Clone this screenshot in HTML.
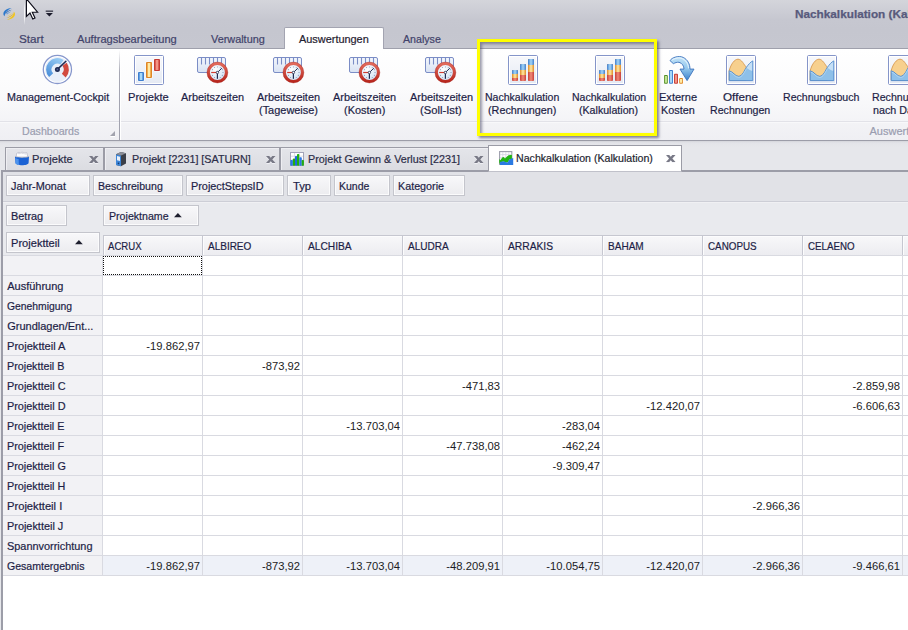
<!DOCTYPE html>
<html><head><meta charset="utf-8"><title>Nachkalkulation (Kalkulation)</title>
<style>
html,body{margin:0;padding:0;}
body{width:908px;height:630px;overflow:hidden;position:relative;background:#fff;font-family:"Liberation Sans",sans-serif;font-size:11px;color:#1d1e46;}
.a{position:absolute;white-space:nowrap;}
.t{line-height:13px;height:13px;transform-origin:0 0;-webkit-text-stroke:.2px;}
.v{line-height:13px;height:13px;text-align:right;width:96px;color:#1c1c24;transform:scaleX(1.02);transform-origin:100% 0;}
#title{left:0;top:0;width:908px;height:48px;background:linear-gradient(#d4d5db 0,#c6c7d0 20px,#c5c6cf 30px,#c6c7d0 48px);}
#seltab{left:284px;top:27px;width:100px;height:22px;box-sizing:border-box;background:#fff;border:1px solid #a3a4b1;border-bottom:none;border-radius:2px 2px 0 0;}
#rib{left:0;top:48px;width:908px;height:93px;background:linear-gradient(#ffffff 0,#fbfbfc 40px,#f4f4f7 72px);border-top:1px solid #9fa0ac;border-bottom:1px solid #9c9da8;box-sizing:border-box;}
#cap{left:0;top:121px;width:908px;height:19px;background:linear-gradient(#f3f3f6,#efeff3);border-top:1px solid #e2e2e8;box-shadow:inset 0 1px 0 #f8f8fa;box-sizing:border-box;}
#gap{left:0;top:141px;width:908px;height:489px;background:linear-gradient(#d4d5da 0,#e3e4e9 2px,#e6e7eb 6px,#e6e7eb 100%);}
.dt{top:147px;height:24px;box-sizing:border-box;border:1px solid #9b9ca6;border-bottom:none;background:linear-gradient(#e4e5ea,#dbdce1);box-shadow:inset 1px 1px 0 #eeeef2;}
#adt{left:488px;top:145px;width:194px;height:27px;box-sizing:border-box;border:1px solid #9b9ca6;border-bottom:1px solid #c0c1ca;background:#fff;}
#cont{left:1px;top:170px;width:920px;height:470px;box-sizing:border-box;border:2px solid #9c9da8;background:#fff;}
#farea{left:3px;top:172px;width:905px;height:29px;background:#e1e2e7;border-bottom:1px solid #cdced6;}
#darea{left:3px;top:202px;width:905px;height:53px;background:#e9eaee;border-top:1px solid #f0f0f3;box-sizing:border-box;}
.fb{height:21px;box-sizing:border-box;border:1px solid #c4c5cc;background:linear-gradient(#f8f8fa,#ececef);box-shadow:inset 0 0 0 1px #fbfbfc;}
.ch{top:235px;height:20px;width:100px;box-sizing:border-box;border-right:1px solid #c6c7d0;border-top:1px solid #c6c7d0;background:linear-gradient(#f8f8fa,#ececf0);box-shadow:inset 1px 1px 0 #fcfcfd;}
.rh{left:3px;width:99px;height:19px;background:#f2f2f5;}
.hl{left:3px;width:905px;height:1px;background:#d9dae1;}
.vl{top:255px;width:1px;height:321px;background:#d9dae1;}
.x{width:9px;height:7px;}
</style></head><body>
<div class="a" id="title"></div>
<div class="a" id="rib"></div>
<div class="a" id="seltab"></div>
<div class="a" id="cap"></div>
<div class="a" style="left:119px;top:50px;width:1px;height:90px;background:linear-gradient(rgba(160,161,175,0),#a6a7b3 25%,#a0a1ae)"></div><div class="a" style="left:120px;top:50px;width:1px;height:90px;background:linear-gradient(rgba(255,255,255,0),#fff 25%,#fff)"></div>
<div class="a" id="gap"></div>
<svg width="0" height="0" style="position:absolute"><defs>
<linearGradient id="gbx" x1="0" y1="0" x2="0" y2="1"><stop offset="0" stop-color="#f7f8fb"/><stop offset="1" stop-color="#e4e9f3"/></linearGradient>
<linearGradient id="gbl" x1="0" y1="0" x2="1" y2="0"><stop offset="0" stop-color="#3f7fcf"/><stop offset=".5" stop-color="#a6d6f6"/><stop offset="1" stop-color="#3f7fcf"/></linearGradient>
<linearGradient id="gor" x1="0" y1="0" x2="1" y2="0"><stop offset="0" stop-color="#e08a26"/><stop offset=".5" stop-color="#ffeaa4"/><stop offset="1" stop-color="#e08a26"/></linearGradient>
<linearGradient id="grd" x1="0" y1="0" x2="1" y2="0"><stop offset="0" stop-color="#c8403a"/><stop offset=".5" stop-color="#f08a78"/><stop offset="1" stop-color="#c8403a"/></linearGradient>
<linearGradient id="ggn" x1="0" y1="0" x2="1" y2="0"><stop offset="0" stop-color="#5a9a2c"/><stop offset=".5" stop-color="#b8e08a"/><stop offset="1" stop-color="#5a9a2c"/></linearGradient>
<linearGradient id="grul" x1="0" y1="0" x2="0" y2="1"><stop offset="0" stop-color="#f4f7fc"/><stop offset="1" stop-color="#d8e2f3"/></linearGradient>
<radialGradient id="gface" cx=".4" cy=".35" r=".7"><stop offset="0" stop-color="#ffffff"/><stop offset="1" stop-color="#c9dcf2"/></radialGradient>
<linearGradient id="gring" x1="0" y1="0" x2="0" y2="1"><stop offset="0" stop-color="#e26a5c"/><stop offset="1" stop-color="#b8281f"/></linearGradient>
<linearGradient id="garr" x1="0" y1="0" x2="0" y2="1"><stop offset="0" stop-color="#c4e4f8"/><stop offset=".5" stop-color="#93c6ec"/><stop offset="1" stop-color="#3a80cc"/></linearGradient>
<linearGradient id="gbarc" x1="0" y1="0" x2="0" y2="1"><stop offset="0" stop-color="#67a9e6"/><stop offset="1" stop-color="#3274c4"/></linearGradient>
<linearGradient id="ggb" x1="0" y1="1" x2=".6" y2="0"><stop offset="0" stop-color="#4288d6"/><stop offset="1" stop-color="#93c8f2"/></linearGradient>
<linearGradient id="gtabx" x1="0" y1="0" x2="0" y2="1"><stop offset="0" stop-color="#8ec0ee"/><stop offset="1" stop-color="#1f62c0"/></linearGradient>
</defs></svg>
<svg class="a" style="left:0;top:0" width="20" height="24" viewBox="0 0 20 24">
<path d="M11.6 8 C7.5 8.2 3.6 10.4 3.4 13.6 C3.3 15 4 15.8 4.6 16.2 C4.6 13.2 7 10.2 11.6 8Z" fill="#2a78cc"/>
<path d="M12 9.8 C8.6 10.2 5.8 12 5.4 14.6 C6.6 12.6 9 11 12 9.8Z" fill="#1f63b8"/>
<path d="M11.2 11.6 C9 12.2 7.2 13.2 6.6 14.8 C8 13.6 9.4 12.6 11.2 11.6Z" fill="#3a8ad8"/>
<path d="M6.8 19.9 C10.9 19.7 14.8 17.5 15 14.3 C15.1 12.9 14.4 12.1 13.8 11.7 C13.8 14.7 11.4 17.7 6.8 19.9Z" fill="#f2c41c"/>
<path d="M6.4 18.1 C9.8 17.7 12.6 15.9 13 13.3 C11.8 15.3 9.4 16.9 6.4 18.1Z" fill="#e8b010"/>
<path d="M7.2 16.3 C9.4 15.7 11.2 14.7 11.8 13.1 C10.4 14.3 9 15.3 7.2 16.3Z" fill="#f6d23c"/>
</svg>
<div class="a" style="left:24px;top:2px;width:1px;height:23px;background:linear-gradient(rgba(255,255,255,0),rgba(255,255,255,.8) 30%,rgba(255,255,255,.8) 70%,rgba(255,255,255,0));"></div>
<svg class="a" style="left:20px;top:0" width="22" height="22" viewBox="20 0 22 22"><path d="M26.4 -1.2 L26.4 16.4 L30 13 L32.8 19 L35 18 L32.3 12.2 L37.6 12.2 Z" fill="#fff" stroke="#0c0c18" stroke-width="1.15" stroke-linejoin="miter"/></svg>
<svg class="a" style="left:45px;top:10px" width="9" height="8" viewBox="0 0 9 8"><rect x="0.7" y="0.6" width="7.4" height="1.1" fill="#1c1c2c"/><path d="M0.9 2.9 L7.9 2.9 L4.4 6.6Z" fill="#1c1c2c"/></svg>
<svg class="a" style="left:42px;top:54px" width="31" height="31" viewBox="0 0 31 31">
<circle cx="15.4" cy="15.4" r="14.1" fill="#fff" stroke="#8797cc" stroke-width="1.3"/>
<circle cx="15.4" cy="15.4" r="12.4" fill="#e9eff9"/>
<path d="M7.14 23.11 A11.3 11.3 0 0 1 21.55 5.92 L18.56 10.54 A5.8 5.8 0 0 0 11.16 19.36Z" fill="url(#ggb)"/>
<path d="M24.70 8.64 A11.5 11.5 0 0 1 23.67 23.39 L19.86 19.71 A6.2 6.2 0 0 0 20.42 11.76Z" fill="#d24a3e"/>
<line x1="15.4" y1="15.4" x2="23.9" y2="7.3" stroke="#1e2a52" stroke-width="1.5" stroke-linecap="round"/>
<circle cx="15.4" cy="15.4" r="2.5" fill="#1e2a52"/><circle cx="15.4" cy="15.4" r="0.9" fill="#56649a"/>
</svg>
<svg class="a" style="left:0;top:0" width="908" height="140" viewBox="0 0 908 140">
<rect x="134.5" y="55.5" width="29" height="29" rx="1.2" fill="url(#gbx)" stroke="#8595c9"/><rect x="135.5" y="56.5" width="27" height="27" fill="none" stroke="#fff"/>
<rect x="137.4" y="71.4" width="7.2" height="10.2" rx="1.4" fill="#fff" opacity=".75"/><rect x="138" y="72" width="6" height="9" rx="0.9" fill="#3f7fcf"/><rect x="139" y="73" width="4" height="7" fill="#5d9be0"/><rect x="139.9" y="73" width="2.2" height="7" fill="#a8d8f7"/><rect x="145.4" y="61.4" width="7.2" height="17.2" rx="1.4" fill="#fff" opacity=".75"/><rect x="146" y="62" width="6" height="16" rx="0.9" fill="#de8626"/><rect x="147" y="63" width="4" height="14" fill="#f0a848"/><rect x="147.9" y="63" width="2.2" height="14" fill="#ffeaa6"/><rect x="153.4" y="58.4" width="7.2" height="13.2" rx="1.4" fill="#fff" opacity=".75"/><rect x="154" y="59" width="6" height="12" rx="0.9" fill="#c43c36"/><rect x="155" y="60" width="4" height="10" fill="#dc5a4e"/><rect x="155.9" y="60" width="2.2" height="10" fill="#f29484"/>
</svg>
<svg class="a" style="left:0;top:0" width="908" height="140" viewBox="0 0 908 140"><g transform="translate(0,0)"><rect x="197.5" y="57.5" width="28" height="15" rx="1.5" fill="url(#grul)" stroke="#7b8dc6"/><line x1="201.5" y1="58" x2="201.5" y2="64.5" stroke="#7b8dc6" stroke-width="1.1"/><line x1="205.5" y1="58" x2="205.5" y2="64.5" stroke="#7b8dc6" stroke-width="1.1"/><line x1="209.5" y1="58" x2="209.5" y2="64.5" stroke="#7b8dc6" stroke-width="1.1"/><line x1="213.5" y1="58" x2="213.5" y2="64.5" stroke="#7b8dc6" stroke-width="1.1"/><line x1="217.5" y1="58" x2="217.5" y2="64.5" stroke="#7b8dc6" stroke-width="1.1"/><line x1="221.5" y1="58" x2="221.5" y2="64.5" stroke="#7b8dc6" stroke-width="1.1"/><circle cx="217.4" cy="72.5" r="9" fill="url(#gface)" stroke="url(#gring)" stroke-width="3"/><circle cx="217.4" cy="72.5" r="10.4" fill="none" stroke="#a8241c" stroke-width=".6" opacity=".7"/><circle cx="217.40" cy="66.90" r=".45" fill="#3c4a78"/><circle cx="220.20" cy="67.65" r=".45" fill="#3c4a78"/><circle cx="222.25" cy="69.70" r=".45" fill="#3c4a78"/><circle cx="223.00" cy="72.50" r=".45" fill="#3c4a78"/><circle cx="222.25" cy="75.30" r=".45" fill="#3c4a78"/><circle cx="220.20" cy="77.35" r=".45" fill="#3c4a78"/><circle cx="217.40" cy="78.10" r=".45" fill="#3c4a78"/><circle cx="214.60" cy="77.35" r=".45" fill="#3c4a78"/><circle cx="212.55" cy="75.30" r=".45" fill="#3c4a78"/><circle cx="211.80" cy="72.50" r=".45" fill="#3c4a78"/><circle cx="212.55" cy="69.70" r=".45" fill="#3c4a78"/><circle cx="214.60" cy="67.65" r=".45" fill="#3c4a78"/><line x1="217.4" y1="72.5" x2="211.3" y2="72.5" stroke="#d23c30" stroke-width="1.2"/><line x1="217.4" y1="72.5" x2="217.4" y2="78.8" stroke="#1e2a52" stroke-width="1.2"/><line x1="217.4" y1="72.5" x2="221.8" y2="68.2" stroke="#1e2a52" stroke-width="1"/><circle cx="217.4" cy="72.5" r="1.2" fill="#fff" stroke="#1e2a52" stroke-width=".8"/></g><g transform="translate(76,0)"><rect x="197.5" y="57.5" width="28" height="15" rx="1.5" fill="url(#grul)" stroke="#7b8dc6"/><line x1="201.5" y1="58" x2="201.5" y2="64.5" stroke="#7b8dc6" stroke-width="1.1"/><line x1="205.5" y1="58" x2="205.5" y2="64.5" stroke="#7b8dc6" stroke-width="1.1"/><line x1="209.5" y1="58" x2="209.5" y2="64.5" stroke="#7b8dc6" stroke-width="1.1"/><line x1="213.5" y1="58" x2="213.5" y2="64.5" stroke="#7b8dc6" stroke-width="1.1"/><line x1="217.5" y1="58" x2="217.5" y2="64.5" stroke="#7b8dc6" stroke-width="1.1"/><line x1="221.5" y1="58" x2="221.5" y2="64.5" stroke="#7b8dc6" stroke-width="1.1"/><circle cx="217.4" cy="72.5" r="9" fill="url(#gface)" stroke="url(#gring)" stroke-width="3"/><circle cx="217.4" cy="72.5" r="10.4" fill="none" stroke="#a8241c" stroke-width=".6" opacity=".7"/><circle cx="217.40" cy="66.90" r=".45" fill="#3c4a78"/><circle cx="220.20" cy="67.65" r=".45" fill="#3c4a78"/><circle cx="222.25" cy="69.70" r=".45" fill="#3c4a78"/><circle cx="223.00" cy="72.50" r=".45" fill="#3c4a78"/><circle cx="222.25" cy="75.30" r=".45" fill="#3c4a78"/><circle cx="220.20" cy="77.35" r=".45" fill="#3c4a78"/><circle cx="217.40" cy="78.10" r=".45" fill="#3c4a78"/><circle cx="214.60" cy="77.35" r=".45" fill="#3c4a78"/><circle cx="212.55" cy="75.30" r=".45" fill="#3c4a78"/><circle cx="211.80" cy="72.50" r=".45" fill="#3c4a78"/><circle cx="212.55" cy="69.70" r=".45" fill="#3c4a78"/><circle cx="214.60" cy="67.65" r=".45" fill="#3c4a78"/><line x1="217.4" y1="72.5" x2="211.3" y2="72.5" stroke="#d23c30" stroke-width="1.2"/><line x1="217.4" y1="72.5" x2="217.4" y2="78.8" stroke="#1e2a52" stroke-width="1.2"/><line x1="217.4" y1="72.5" x2="221.8" y2="68.2" stroke="#1e2a52" stroke-width="1"/><circle cx="217.4" cy="72.5" r="1.2" fill="#fff" stroke="#1e2a52" stroke-width=".8"/></g><g transform="translate(152,0)"><rect x="197.5" y="57.5" width="28" height="15" rx="1.5" fill="url(#grul)" stroke="#7b8dc6"/><line x1="201.5" y1="58" x2="201.5" y2="64.5" stroke="#7b8dc6" stroke-width="1.1"/><line x1="205.5" y1="58" x2="205.5" y2="64.5" stroke="#7b8dc6" stroke-width="1.1"/><line x1="209.5" y1="58" x2="209.5" y2="64.5" stroke="#7b8dc6" stroke-width="1.1"/><line x1="213.5" y1="58" x2="213.5" y2="64.5" stroke="#7b8dc6" stroke-width="1.1"/><line x1="217.5" y1="58" x2="217.5" y2="64.5" stroke="#7b8dc6" stroke-width="1.1"/><line x1="221.5" y1="58" x2="221.5" y2="64.5" stroke="#7b8dc6" stroke-width="1.1"/><circle cx="217.4" cy="72.5" r="9" fill="url(#gface)" stroke="url(#gring)" stroke-width="3"/><circle cx="217.4" cy="72.5" r="10.4" fill="none" stroke="#a8241c" stroke-width=".6" opacity=".7"/><circle cx="217.40" cy="66.90" r=".45" fill="#3c4a78"/><circle cx="220.20" cy="67.65" r=".45" fill="#3c4a78"/><circle cx="222.25" cy="69.70" r=".45" fill="#3c4a78"/><circle cx="223.00" cy="72.50" r=".45" fill="#3c4a78"/><circle cx="222.25" cy="75.30" r=".45" fill="#3c4a78"/><circle cx="220.20" cy="77.35" r=".45" fill="#3c4a78"/><circle cx="217.40" cy="78.10" r=".45" fill="#3c4a78"/><circle cx="214.60" cy="77.35" r=".45" fill="#3c4a78"/><circle cx="212.55" cy="75.30" r=".45" fill="#3c4a78"/><circle cx="211.80" cy="72.50" r=".45" fill="#3c4a78"/><circle cx="212.55" cy="69.70" r=".45" fill="#3c4a78"/><circle cx="214.60" cy="67.65" r=".45" fill="#3c4a78"/><line x1="217.4" y1="72.5" x2="211.3" y2="72.5" stroke="#d23c30" stroke-width="1.2"/><line x1="217.4" y1="72.5" x2="217.4" y2="78.8" stroke="#1e2a52" stroke-width="1.2"/><line x1="217.4" y1="72.5" x2="221.8" y2="68.2" stroke="#1e2a52" stroke-width="1"/><circle cx="217.4" cy="72.5" r="1.2" fill="#fff" stroke="#1e2a52" stroke-width=".8"/></g><g transform="translate(228,0)"><rect x="197.5" y="57.5" width="28" height="15" rx="1.5" fill="url(#grul)" stroke="#7b8dc6"/><line x1="201.5" y1="58" x2="201.5" y2="64.5" stroke="#7b8dc6" stroke-width="1.1"/><line x1="205.5" y1="58" x2="205.5" y2="64.5" stroke="#7b8dc6" stroke-width="1.1"/><line x1="209.5" y1="58" x2="209.5" y2="64.5" stroke="#7b8dc6" stroke-width="1.1"/><line x1="213.5" y1="58" x2="213.5" y2="64.5" stroke="#7b8dc6" stroke-width="1.1"/><line x1="217.5" y1="58" x2="217.5" y2="64.5" stroke="#7b8dc6" stroke-width="1.1"/><line x1="221.5" y1="58" x2="221.5" y2="64.5" stroke="#7b8dc6" stroke-width="1.1"/><circle cx="217.4" cy="72.5" r="9" fill="url(#gface)" stroke="url(#gring)" stroke-width="3"/><circle cx="217.4" cy="72.5" r="10.4" fill="none" stroke="#a8241c" stroke-width=".6" opacity=".7"/><circle cx="217.40" cy="66.90" r=".45" fill="#3c4a78"/><circle cx="220.20" cy="67.65" r=".45" fill="#3c4a78"/><circle cx="222.25" cy="69.70" r=".45" fill="#3c4a78"/><circle cx="223.00" cy="72.50" r=".45" fill="#3c4a78"/><circle cx="222.25" cy="75.30" r=".45" fill="#3c4a78"/><circle cx="220.20" cy="77.35" r=".45" fill="#3c4a78"/><circle cx="217.40" cy="78.10" r=".45" fill="#3c4a78"/><circle cx="214.60" cy="77.35" r=".45" fill="#3c4a78"/><circle cx="212.55" cy="75.30" r=".45" fill="#3c4a78"/><circle cx="211.80" cy="72.50" r=".45" fill="#3c4a78"/><circle cx="212.55" cy="69.70" r=".45" fill="#3c4a78"/><circle cx="214.60" cy="67.65" r=".45" fill="#3c4a78"/><line x1="217.4" y1="72.5" x2="211.3" y2="72.5" stroke="#d23c30" stroke-width="1.2"/><line x1="217.4" y1="72.5" x2="217.4" y2="78.8" stroke="#1e2a52" stroke-width="1.2"/><line x1="217.4" y1="72.5" x2="221.8" y2="68.2" stroke="#1e2a52" stroke-width="1"/><circle cx="217.4" cy="72.5" r="1.2" fill="#fff" stroke="#1e2a52" stroke-width=".8"/></g></svg>
<svg class="a" style="left:0;top:0" width="908" height="140" viewBox="0 0 908 140"><rect x="508.5" y="55.5" width="29" height="29" rx="1.2" fill="url(#gbx)" stroke="#8595c9"/><rect x="509.5" y="56.5" width="27" height="27" fill="none" stroke="#fff"/><rect x="512" y="70" width="6" height="11" rx="0.9" fill="url(#grd)"/><rect x="512" y="70" width="6" height="8" rx="0.9" fill="url(#gor)"/><rect x="512" y="74" width="6" height="4" fill="url(#gor)"/><rect x="512" y="70" width="6" height="4" rx="0.9" fill="url(#gbl)"/><rect x="520" y="64" width="6" height="17" rx="0.9" fill="url(#grd)"/><rect x="520" y="64" width="6" height="11" rx="0.9" fill="url(#gor)"/><rect x="520" y="70" width="6" height="5" fill="url(#gor)"/><rect x="520" y="64" width="6" height="6" rx="0.9" fill="url(#gbl)"/><rect x="528" y="59" width="6" height="22" rx="0.9" fill="url(#grd)"/><rect x="528" y="59" width="6" height="13" rx="0.9" fill="url(#gor)"/><rect x="528" y="65" width="6" height="7" fill="url(#gor)"/><rect x="528" y="59" width="6" height="6" rx="0.9" fill="url(#gbl)"/><rect x="595.5" y="55.5" width="29" height="29" rx="1.2" fill="url(#gbx)" stroke="#8595c9"/><rect x="596.5" y="56.5" width="27" height="27" fill="none" stroke="#fff"/><rect x="599" y="70" width="6" height="11" rx="0.9" fill="url(#grd)"/><rect x="599" y="70" width="6" height="8" rx="0.9" fill="url(#gor)"/><rect x="599" y="74" width="6" height="4" fill="url(#gor)"/><rect x="599" y="70" width="6" height="4" rx="0.9" fill="url(#gbl)"/><rect x="607" y="64" width="6" height="17" rx="0.9" fill="url(#grd)"/><rect x="607" y="64" width="6" height="11" rx="0.9" fill="url(#gor)"/><rect x="607" y="70" width="6" height="5" fill="url(#gor)"/><rect x="607" y="64" width="6" height="6" rx="0.9" fill="url(#gbl)"/><rect x="615" y="59" width="6" height="22" rx="0.9" fill="url(#grd)"/><rect x="615" y="59" width="6" height="13" rx="0.9" fill="url(#gor)"/><rect x="615" y="65" width="6" height="7" fill="url(#gor)"/><rect x="615" y="59" width="6" height="6" rx="0.9" fill="url(#gbl)"/></svg>
<svg class="a" style="left:0;top:0" width="908" height="140" viewBox="0 0 908 140">
<rect x="663.4" y="74.4" width="5.0" height="9.900000000000002" rx="1.4" fill="#fff" opacity=".75"/><rect x="664" y="75" width="3.8" height="8.700000000000003" rx="0.9" fill="#568f2a"/><rect x="665" y="76" width="1.7999999999999998" height="6.700000000000003" fill="#78b444"/><rect x="664.8" y="76" width="2.2" height="6.700000000000003" fill="#bfe292"/><rect x="668.4" y="69.4" width="5.2" height="14.900000000000002" rx="1.4" fill="#fff" opacity=".75"/><rect x="669" y="70" width="4" height="13.700000000000003" rx="0.9" fill="#3f7fcf"/><rect x="670" y="71" width="2" height="11.700000000000003" fill="#5d9be0"/><rect x="669.9" y="71" width="2.2" height="11.700000000000003" fill="#a8d8f7"/><rect x="673.4" y="73.2" width="5.2" height="11.100000000000005" rx="1.4" fill="#fff" opacity=".75"/><rect x="674" y="73.8" width="4" height="9.900000000000006" rx="0.9" fill="#c43c36"/><rect x="675" y="74.8" width="2" height="7.900000000000006" fill="#dc5a4e"/><rect x="674.9" y="74.8" width="2.2" height="7.900000000000006" fill="#f29484"/><rect x="678.6" y="77.4" width="5.0" height="6.900000000000003" rx="1.4" fill="#fff" opacity=".75"/><rect x="679.2" y="78" width="3.8" height="5.700000000000003" rx="0.9" fill="#de8626"/><rect x="680.2" y="79" width="1.7999999999999998" height="3.700000000000003" fill="#f0a848"/><rect x="680.0" y="79" width="2.2" height="3.700000000000003" fill="#ffeaa6"/>
<path d="M670 60.6 C672 57.3 679 55.3 683.2 57.4 C687.6 59.6 690 64 690 69.1 L694 69.1 L687.1 80.6 L680 69.1 L684 69.1 C684 66 682 63 679 62.3 C677 62 675 62.8 673.4 63.7 Z" fill="url(#garr)" stroke="#3b72bc" stroke-width=".9" stroke-linejoin="round"/>
<path d="M671.6 60.4 C674 58.2 679 57 682.6 58.7 C686 60.4 688.3 64 688.6 68.4" fill="none" stroke="#e4f3fc" stroke-width="1.1" opacity=".9"/>
</svg>
<svg class="a" style="left:0;top:0" width="908" height="140" viewBox="0 0 908 140"><rect x="726.5" y="55.5" width="29" height="29" rx="1.2" fill="url(#gbx)" stroke="#8595c9"/><rect x="727.5" y="56.5" width="27" height="27" fill="none" stroke="#fff"/><path d="M729.2 70.6 C731 64 734.5 59.2 738 59.2 C741.5 59.2 744 64.5 746.3 67.4 L746.3 80 L729.2 80Z" fill="#f7d08e" stroke="#d89a50" stroke-width=".9"/><path d="M746.3 67.4 C748.5 64.5 750.5 62 752.8 60.9 L752.8 70.6 C750.5 70.3 748 69.2 746.3 67.4Z" fill="#c6e0f6"/><path d="M729.2 70.8 C733 71.5 735 76.3 738.6 76.3 C742.5 76.3 744.5 70 746.3 67.4 C748.5 69.4 750.5 70.4 752.8 70.6 L752.8 80.6 L729.2 80.6Z" fill="#8ec0e9"/><path d="M729.2 70.8 C733 71.5 735 76.3 738.6 76.3 C742.5 76.3 744.5 70 746.3 67.4 C748.5 64.5 750.5 62 752.8 60.9 L752.8 80.6 L729.2 80.6Z" fill="none" stroke="#4c88cd" stroke-width=".9"/><path d="M729.6 72 C733 72.7 735 77.4 738.6 77.4 C742.5 77.4 744.5 71.4 746.5 68.6" fill="none" stroke="#b8dbf5" stroke-width=".8"/><rect x="807.5" y="55.5" width="29" height="29" rx="1.2" fill="url(#gbx)" stroke="#8595c9"/><rect x="808.5" y="56.5" width="27" height="27" fill="none" stroke="#fff"/><path d="M810.2 70.6 C812 64 815.5 59.2 819 59.2 C822.5 59.2 825 64.5 827.3 67.4 L827.3 80 L810.2 80Z" fill="#f7d08e" stroke="#d89a50" stroke-width=".9"/><path d="M827.3 67.4 C829.5 64.5 831.5 62 833.8 60.9 L833.8 70.6 C831.5 70.3 829 69.2 827.3 67.4Z" fill="#c6e0f6"/><path d="M810.2 70.8 C814 71.5 816 76.3 819.6 76.3 C823.5 76.3 825.5 70 827.3 67.4 C829.5 69.4 831.5 70.4 833.8 70.6 L833.8 80.6 L810.2 80.6Z" fill="#8ec0e9"/><path d="M810.2 70.8 C814 71.5 816 76.3 819.6 76.3 C823.5 76.3 825.5 70 827.3 67.4 C829.5 64.5 831.5 62 833.8 60.9 L833.8 80.6 L810.2 80.6Z" fill="none" stroke="#4c88cd" stroke-width=".9"/><path d="M810.6 72 C814 72.7 816 77.4 819.6 77.4 C823.5 77.4 825.5 71.4 827.5 68.6" fill="none" stroke="#b8dbf5" stroke-width=".8"/><rect x="888.5" y="55.5" width="29" height="29" rx="1.2" fill="url(#gbx)" stroke="#8595c9"/><rect x="889.5" y="56.5" width="27" height="27" fill="none" stroke="#fff"/><path d="M891.2 70.6 C893 64 896.5 59.2 900 59.2 C903.5 59.2 906 64.5 908.3 67.4 L908.3 80 L891.2 80Z" fill="#f7d08e" stroke="#d89a50" stroke-width=".9"/><path d="M908.3 67.4 C910.5 64.5 912.5 62 914.8 60.9 L914.8 70.6 C912.5 70.3 910 69.2 908.3 67.4Z" fill="#c6e0f6"/><path d="M891.2 70.8 C895 71.5 897 76.3 900.6 76.3 C904.5 76.3 906.5 70 908.3 67.4 C910.5 69.4 912.5 70.4 914.8 70.6 L914.8 80.6 L891.2 80.6Z" fill="#8ec0e9"/><path d="M891.2 70.8 C895 71.5 897 76.3 900.6 76.3 C904.5 76.3 906.5 70 908.3 67.4 C910.5 64.5 912.5 62 914.8 60.9 L914.8 80.6 L891.2 80.6Z" fill="none" stroke="#4c88cd" stroke-width=".9"/><path d="M891.6 72 C895 72.7 897 77.4 900.6 77.4 C904.5 77.4 906.5 71.4 908.5 68.6" fill="none" stroke="#b8dbf5" stroke-width=".8"/></svg>
<svg class="a" style="left:110px;top:130px" width="6" height="8" viewBox="0 0 6 8"><path d="M5 2 L5 7 L0 7Z" fill="#fff"/><path d="M5 1 L5 6 L0 6Z" fill="#a2a3ae"/></svg>
<!-- yellow highlight -->
<div class="a" style="left:477px;top:39px;width:180px;height:97px;box-sizing:border-box;border:3px solid #ffff00;box-shadow:1.5px 1.5px 2.5px rgba(70,70,100,.65), inset 2px 2px 3px rgba(70,70,100,.55);"></div>
<!-- document tabs -->
<div class="a dt" style="left:5px;width:99px;"></div>
<div class="a dt" style="left:104px;width:176px;"></div>
<div class="a dt" style="left:280px;width:208px;border-right:none;"></div>
<div class="a" id="cont"></div>
<div class="a" id="adt"></div>
<div class="a" id="farea"></div>
<div class="a" id="darea"></div>
<!-- field buttons -->
<div class="a fb" style="left:6px;top:175px;width:84px;"></div>
<div class="a fb" style="left:93px;top:175px;width:90px;"></div>
<div class="a fb" style="left:186px;top:175px;width:98px;"></div>
<div class="a fb" style="left:287px;top:175px;width:44px;"></div>
<div class="a fb" style="left:334px;top:175px;width:56px;"></div>
<div class="a fb" style="left:393px;top:175px;width:72px;"></div>
<div class="a fb" style="left:6px;top:205px;width:61px;"></div>
<div class="a fb" style="left:103px;top:205px;width:96px;"></div>
<div class="a fb" style="left:6px;top:232px;width:94px;"></div>
<svg class="a" style="left:89px;top:156px" width="10" height="8" viewBox="0 0 10 8"><path d="M0 1 L3.2 1 L4.75 2.7 L6.3 1 L9.5 1 L6.35 4.5 L9.5 8 L6.3 8 L4.75 6.3 L3.2 8 L0 8 L3.15 4.5Z" fill="#f4f4f7" opacity=".8"/><path d="M0 0 L3.2 0 L4.75 1.7 L6.3 0 L9.5 0 L6.35 3.5 L9.5 7 L6.3 7 L4.75 5.3 L3.2 7 L0 7 L3.15 3.5Z" fill="#787986"/></svg>
<svg class="a" style="left:265.5px;top:156px" width="10" height="8" viewBox="0 0 10 8"><path d="M0 1 L3.2 1 L4.75 2.7 L6.3 1 L9.5 1 L6.35 4.5 L9.5 8 L6.3 8 L4.75 6.3 L3.2 8 L0 8 L3.15 4.5Z" fill="#f4f4f7" opacity=".8"/><path d="M0 0 L3.2 0 L4.75 1.7 L6.3 0 L9.5 0 L6.35 3.5 L9.5 7 L6.3 7 L4.75 5.3 L3.2 7 L0 7 L3.15 3.5Z" fill="#787986"/></svg>
<svg class="a" style="left:474px;top:156px" width="10" height="8" viewBox="0 0 10 8"><path d="M0 1 L3.2 1 L4.75 2.7 L6.3 1 L9.5 1 L6.35 4.5 L9.5 8 L6.3 8 L4.75 6.3 L3.2 8 L0 8 L3.15 4.5Z" fill="#f4f4f7" opacity=".8"/><path d="M0 0 L3.2 0 L4.75 1.7 L6.3 0 L9.5 0 L6.35 3.5 L9.5 7 L6.3 7 L4.75 5.3 L3.2 7 L0 7 L3.15 3.5Z" fill="#787986"/></svg>
<svg class="a" style="left:666px;top:155px" width="10" height="8" viewBox="0 0 10 8"><path d="M0 1 L3.2 1 L4.75 2.7 L6.3 1 L9.5 1 L6.35 4.5 L9.5 8 L6.3 8 L4.75 6.3 L3.2 8 L0 8 L3.15 4.5Z" fill="#f4f4f7" opacity=".8"/><path d="M0 0 L3.2 0 L4.75 1.7 L6.3 0 L9.5 0 L6.35 3.5 L9.5 7 L6.3 7 L4.75 5.3 L3.2 7 L0 7 L3.15 3.5Z" fill="#787986"/></svg>
<svg class="a" style="left:14px;top:151px" width="16" height="16" viewBox="0 0 16 16">
<path d="M2.2 6 L2.6 2.4 L5 1.2 L6.2 2.2 L8 1 L10 2 L12.8 1.6 L13.8 6 Z" fill="#fdfdfe" stroke="#b4b6c4" stroke-width=".7"/>
<path d="M4 2.6H6M7.4 2.4H9.6M10.6 3H12.4" stroke="#c8cad4" stroke-width=".7"/>
<path d="M1 5.2 C4 6.4 12 6.4 15 5.2 L14.6 12 C14 15 2 15 1.4 12 Z" fill="#1b62d4"/>
<path d="M1 5.2 C4 6.3 12 6.3 15 5.2 L14.97 5.8 C12 7 4 7 1.03 5.8Z" fill="#f0dcc0" opacity=".85"/>
<path d="M1.5 7 C2.5 7.6 3.5 7.8 4.6 7.9 L4.9 14 C3 13.6 1.8 13 1.5 12Z" fill="#5aa0f2" opacity=".8"/>
</svg>
<svg class="a" style="left:115px;top:151px" width="12" height="16" viewBox="0 0 12 16">
<path d="M1 3.2 L6 1 L11 2.2 L11 12.6 L6 15.2 L1 14 Z" fill="#3b3f48"/>
<path d="M1 3.2 L6 4.6 L6 15.2 L1 14 Z" fill="#3d86d8"/>
<path d="M2 5 L5 5.8 L5 10 L2 9.2Z" fill="#e8f0fa"/>
<path d="M1 3.2 L6 1 L11 2.2 L6 4.6Z" fill="#8a8e98"/>
<circle cx="3.5" cy="12.4" r=".8" fill="#14386e"/>
</svg>
<svg class="a" style="left:290px;top:152px" width="14" height="14" viewBox="0 0 14 14">
<rect x=".5" y=".5" width="13" height="13" fill="#fff" stroke="#a2a3b8"/>
<path d="M1 4.2H13M1 8H13M4.6 1V13M9.2 1V13" stroke="#d2d3e0" stroke-width=".8"/>
<rect x="0.3" y="7.9" width="2.6" height="5.9" rx=".8" fill="#2a78e4"/><rect x="2.9" y="6.5" width="2.2" height="7.3" rx=".8" fill="#22ac12"/>
<rect x="5" y="3.9" width="2.2" height="9.9" rx=".8" fill="#1e66e0"/><rect x="7" y="2.1" width="2.3" height="11.7" rx=".8" fill="#1fb010"/>
<rect x="9.3" y="5.3" width="2.5" height="8.5" rx=".8" fill="#2a78e4"/><rect x="11.7" y="8" width="2.2" height="5.8" rx=".8" fill="#22ac12"/>
</svg>
<svg class="a" style="left:499px;top:151px" width="15" height="14" viewBox="0 0 15 14">
<rect x=".6" y=".6" width="12.2" height="12.8" fill="#fff" stroke="#9c9dac" stroke-width="1.1"/>
<path d="M1 3.6H12.6M1 6.6H12.6M3.8 1V13M6.8 1V13M9.8 1V13" stroke="#d6d4e4" stroke-width=".8"/>
<path d="M0.2 8 L1.4 9.3 L3.2 6.6 L4.6 5.9 L6 7.4 L8 5.5 L9.6 4.2 L12.9 3.8 L12.9 8 L10.5 8.6 L8.6 11.6 L7 11.4 L4.5 10.4 L1 11.2 L0.2 13.4Z" fill="#22b414"/>
<path d="M1 11 L4.5 10.2 L7 11.3 L8.6 11.5 L10.5 8.2 L14.2 6.9 L14.2 13.9 L1 13.9Z" fill="#2a7ae2"/>
</svg>
<div class="a ch" style="left:103px;border-left:1px solid #c6c7d0;"></div>
<div class="a ch" style="left:203px;"></div>
<div class="a ch" style="left:303px;"></div>
<div class="a ch" style="left:403px;"></div>
<div class="a ch" style="left:503px;"></div>
<div class="a ch" style="left:603px;"></div>
<div class="a ch" style="left:703px;"></div>
<div class="a ch" style="left:803px;"></div>
<div class="a ch" style="left:903px;"></div>
<div class="a rh" style="top:256px;"></div>
<div class="a rh" style="top:276px;"></div>
<div class="a rh" style="top:296px;"></div>
<div class="a rh" style="top:316px;"></div>
<div class="a rh" style="top:336px;"></div>
<div class="a rh" style="top:356px;"></div>
<div class="a rh" style="top:376px;"></div>
<div class="a rh" style="top:396px;"></div>
<div class="a rh" style="top:416px;"></div>
<div class="a rh" style="top:436px;"></div>
<div class="a rh" style="top:456px;"></div>
<div class="a rh" style="top:476px;"></div>
<div class="a rh" style="top:496px;"></div>
<div class="a rh" style="top:516px;"></div>
<div class="a rh" style="top:536px;"></div>
<div class="a rh" style="top:556px;"></div>
<div class="a" style="left:103px;top:556px;width:805px;height:19px;background:#eef1f8;"></div>
<div class="a hl" style="top:255px;"></div>
<div class="a hl" style="top:275px;"></div>
<div class="a hl" style="top:295px;"></div>
<div class="a hl" style="top:315px;"></div>
<div class="a hl" style="top:335px;"></div>
<div class="a hl" style="top:355px;"></div>
<div class="a hl" style="top:375px;"></div>
<div class="a hl" style="top:395px;"></div>
<div class="a hl" style="top:415px;"></div>
<div class="a hl" style="top:435px;"></div>
<div class="a hl" style="top:455px;"></div>
<div class="a hl" style="top:475px;"></div>
<div class="a hl" style="top:495px;"></div>
<div class="a hl" style="top:515px;"></div>
<div class="a hl" style="top:535px;"></div>
<div class="a hl" style="top:555px;"></div>
<div class="a hl" style="top:575px;"></div>
<div class="a vl" style="left:102px;"></div>
<div class="a vl" style="left:202px;"></div>
<div class="a vl" style="left:302px;"></div>
<div class="a vl" style="left:402px;"></div>
<div class="a vl" style="left:502px;"></div>
<div class="a vl" style="left:602px;"></div>
<div class="a vl" style="left:702px;"></div>
<div class="a vl" style="left:802px;"></div>
<div class="a vl" style="left:902px;"></div>
<div class="a" style="left:103px;top:256px;width:99px;height:19px;box-sizing:border-box;border:1px dotted #111;"></div>
<svg class="a" style="left:173.5px;top:213px" width="8" height="5"><path d="M0 4.3 L3.9 0 L7.8 4.3Z" fill="#1e1f2e"/></svg>
<svg class="a" style="left:74.5px;top:240px" width="8" height="5"><path d="M0 4.3 L3.9 0 L7.8 4.3Z" fill="#1e1f2e"/></svg>
<div class="a t" style="left:794.5px;top:8.0px;transform:scaleX(1.070);font-weight:bold;color:#585a7c;-webkit-text-stroke:.25px #585a7c;">Nachkalkulation (Kalkulation)</div>
<div class="a t" style="left:18.5px;top:33.0px;transform:scaleX(1.067);color:#41426a;">Start</div>
<div class="a t" style="left:76.5px;top:33.0px;transform:scaleX(1.007);color:#41426a;">Auftragsbearbeitung</div>
<div class="a t" style="left:210.5px;top:33.0px;transform:scaleX(0.988);color:#41426a;">Verwaltung</div>
<div class="a t" style="left:298.5px;top:33.0px;transform:scaleX(0.992);color:#1f2030;">Auswertungen</div>
<div class="a t" style="left:402.5px;top:33.0px;transform:scaleX(0.966);color:#41426a;">Analyse</div>
<div class="a t" style="left:7.1px;top:91.0px;transform:scaleX(0.977);color:#1d1e46;">Management-Cockpit</div>
<div class="a t" style="left:127.5px;top:91.0px;transform:scaleX(1.011);color:#1d1e46;">Projekte</div>
<div class="a t" style="left:181.4px;top:91.0px;transform:scaleX(0.991);color:#1d1e46;">Arbeitszeiten</div>
<div class="a t" style="left:257.4px;top:91.0px;transform:scaleX(0.991);color:#1d1e46;">Arbeitszeiten</div>
<div class="a t" style="left:259.4px;top:104.0px;transform:scaleX(0.995);color:#1d1e46;">(Tageweise)</div>
<div class="a t" style="left:333.4px;top:91.0px;transform:scaleX(0.991);color:#1d1e46;">Arbeitszeiten</div>
<div class="a t" style="left:344.2px;top:104.0px;transform:scaleX(0.993);color:#1d1e46;">(Kosten)</div>
<div class="a t" style="left:409.7px;top:91.0px;transform:scaleX(0.991);color:#1d1e46;">Arbeitszeiten</div>
<div class="a t" style="left:420.3px;top:104.0px;transform:scaleX(1.021);color:#1d1e46;">(Soll-Ist)</div>
<div class="a t" style="left:485.2px;top:91.0px;transform:scaleX(0.957);color:#1d1e46;">Nachkalkulation</div>
<div class="a t" style="left:488.3px;top:104.0px;transform:scaleX(0.981);color:#1d1e46;">(Rechnungen)</div>
<div class="a t" style="left:572.2px;top:91.0px;transform:scaleX(0.955);color:#1d1e46;">Nachkalkulation</div>
<div class="a t" style="left:579.3px;top:104.0px;transform:scaleX(0.965);color:#1d1e46;">(Kalkulation)</div>
<div class="a t" style="left:659.0px;top:91.0px;transform:scaleX(1.005);color:#1d1e46;">Externe</div>
<div class="a t" style="left:660.8px;top:104.0px;transform:scaleX(0.984);color:#1d1e46;">Kosten</div>
<div class="a t" style="left:722.9px;top:91.0px;transform:scaleX(1.063);color:#1d1e46;">Offene</div>
<div class="a t" style="left:710.2px;top:104.0px;transform:scaleX(0.966);color:#1d1e46;">Rechnungen</div>
<div class="a t" style="left:783.2px;top:91.0px;transform:scaleX(0.960);color:#1d1e46;">Rechnungsbuch</div>
<div class="a t" style="left:871.8px;top:91.0px;transform:scaleX(0.966);color:#1d1e46;">Rechnungen</div>
<div class="a t" style="left:873.0px;top:104.0px;transform:scaleX(0.974);color:#1d1e46;">nach Datum</div>
<div class="a t" style="left:22.3px;top:125.0px;transform:scaleX(0.966);color:#9a9db0;">Dashboards</div>
<div class="a t" style="left:869.5px;top:125.0px;color:#9a9db0;">Auswertungen</div>
<div class="a t" style="left:31.8px;top:153.0px;transform:scaleX(1.008);color:#2c2d48;">Projekte</div>
<div class="a t" style="left:131.5px;top:153.0px;transform:scaleX(0.978);color:#2c2d48;">Projekt [2231] [SATURN]</div>
<div class="a t" style="left:307.5px;top:153.0px;transform:scaleX(0.979);color:#2c2d48;">Projekt Gewinn &amp; Verlust [2231]</div>
<div class="a t" style="left:515.8px;top:152.0px;transform:scaleX(0.965);color:#1e1f30;">Nachkalkulation (Kalkulation)</div>
<div class="a t" style="left:11.4px;top:180.0px;transform:scaleX(0.987);color:#1d1e46;">Jahr-Monat</div>
<div class="a t" style="left:97.5px;top:180.0px;transform:scaleX(0.963);color:#1d1e46;">Beschreibung</div>
<div class="a t" style="left:191.1px;top:180.0px;transform:scaleX(0.988);color:#1d1e46;">ProjectStepsID</div>
<div class="a t" style="left:292.5px;top:180.0px;transform:scaleX(1.021);color:#1d1e46;">Typ</div>
<div class="a t" style="left:338.9px;top:180.0px;transform:scaleX(0.956);color:#1d1e46;">Kunde</div>
<div class="a t" style="left:398.3px;top:180.0px;transform:scaleX(0.977);color:#1d1e46;">Kategorie</div>
<div class="a t" style="left:11.1px;top:210.0px;transform:scaleX(0.993);color:#1d1e46;">Betrag</div>
<div class="a t" style="left:108.5px;top:210.0px;transform:scaleX(0.965);color:#1d1e46;">Projektname</div>
<div class="a t" style="left:11.1px;top:237.0px;transform:scaleX(1.008);color:#1d1e46;">Projektteil</div>
<div class="a t" style="left:107.9px;top:240.0px;transform:scaleX(0.872);color:#1d1e46;">ACRUX</div>
<div class="a t" style="left:207.9px;top:240.0px;transform:scaleX(0.908);color:#1d1e46;">ALBIREO</div>
<div class="a t" style="left:307.9px;top:240.0px;transform:scaleX(0.928);color:#1d1e46;">ALCHIBA</div>
<div class="a t" style="left:407.9px;top:240.0px;transform:scaleX(0.912);color:#1d1e46;">ALUDRA</div>
<div class="a t" style="left:507.9px;top:240.0px;transform:scaleX(0.932);color:#1d1e46;">ARRAKIS</div>
<div class="a t" style="left:607.9px;top:240.0px;transform:scaleX(0.912);color:#1d1e46;">BAHAM</div>
<div class="a t" style="left:707.9px;top:240.0px;transform:scaleX(0.895);color:#1d1e46;">CANOPUS</div>
<div class="a t" style="left:807.9px;top:240.0px;transform:scaleX(0.886);color:#1d1e46;">CELAENO</div>
<div class="a t" style="left:7.2px;top:280.0px;color:#1d1e46;">Ausführung</div>
<div class="a t" style="left:7.2px;top:300.0px;transform:scaleX(0.941);color:#1d1e46;">Genehmigung</div>
<div class="a t" style="left:7.2px;top:320.0px;color:#1d1e46;">Grundlagen/Ent...</div>
<div class="a t" style="left:7.2px;top:340.0px;transform:scaleX(1.007);color:#1d1e46;">Projektteil A</div>
<div class="a t" style="left:7.2px;top:360.0px;transform:scaleX(0.978);color:#1d1e46;">Projektteil B</div>
<div class="a t" style="left:7.2px;top:380.0px;transform:scaleX(0.987);color:#1d1e46;">Projektteil C</div>
<div class="a t" style="left:7.2px;top:400.0px;transform:scaleX(0.987);color:#1d1e46;">Projektteil D</div>
<div class="a t" style="left:7.2px;top:420.0px;transform:scaleX(0.978);color:#1d1e46;">Projektteil E</div>
<div class="a t" style="left:7.2px;top:440.0px;transform:scaleX(0.981);color:#1d1e46;">Projektteil F</div>
<div class="a t" style="left:7.2px;top:460.0px;transform:scaleX(0.981);color:#1d1e46;">Projektteil G</div>
<div class="a t" style="left:7.2px;top:480.0px;transform:scaleX(0.983);color:#1d1e46;">Projektteil H</div>
<div class="a t" style="left:7.2px;top:500.0px;transform:scaleX(1.016);color:#1d1e46;">Projektteil I</div>
<div class="a t" style="left:7.2px;top:520.0px;transform:scaleX(0.990);color:#1d1e46;">Projektteil J</div>
<div class="a t" style="left:7.2px;top:540.0px;transform:scaleX(0.991);color:#1d1e46;">Spannvorrichtung</div>
<div class="a t" style="left:7.2px;top:560.0px;transform:scaleX(0.960);color:#1d1e46;">Gesamtergebnis</div>
<div class="a v" style="left:104.3px;top:340px;">-19.862,97</div>
<div class="a v" style="left:204.3px;top:360px;">-873,92</div>
<div class="a v" style="left:404.3px;top:380px;">-471,83</div>
<div class="a v" style="left:804.3px;top:380px;">-2.859,98</div>
<div class="a v" style="left:604.3px;top:400px;">-12.420,07</div>
<div class="a v" style="left:804.3px;top:400px;">-6.606,63</div>
<div class="a v" style="left:304.3px;top:420px;">-13.703,04</div>
<div class="a v" style="left:504.3px;top:420px;">-283,04</div>
<div class="a v" style="left:404.3px;top:440px;">-47.738,08</div>
<div class="a v" style="left:504.3px;top:440px;">-462,24</div>
<div class="a v" style="left:504.3px;top:460px;">-9.309,47</div>
<div class="a v" style="left:704.3px;top:500px;">-2.966,36</div>
<div class="a v" style="left:104.3px;top:560px;">-19.862,97</div>
<div class="a v" style="left:204.3px;top:560px;">-873,92</div>
<div class="a v" style="left:304.3px;top:560px;">-13.703,04</div>
<div class="a v" style="left:404.3px;top:560px;">-48.209,91</div>
<div class="a v" style="left:504.3px;top:560px;">-10.054,75</div>
<div class="a v" style="left:604.3px;top:560px;">-12.420,07</div>
<div class="a v" style="left:704.3px;top:560px;">-2.966,36</div>
<div class="a v" style="left:804.3px;top:560px;">-9.466,61</div>
</body></html>
